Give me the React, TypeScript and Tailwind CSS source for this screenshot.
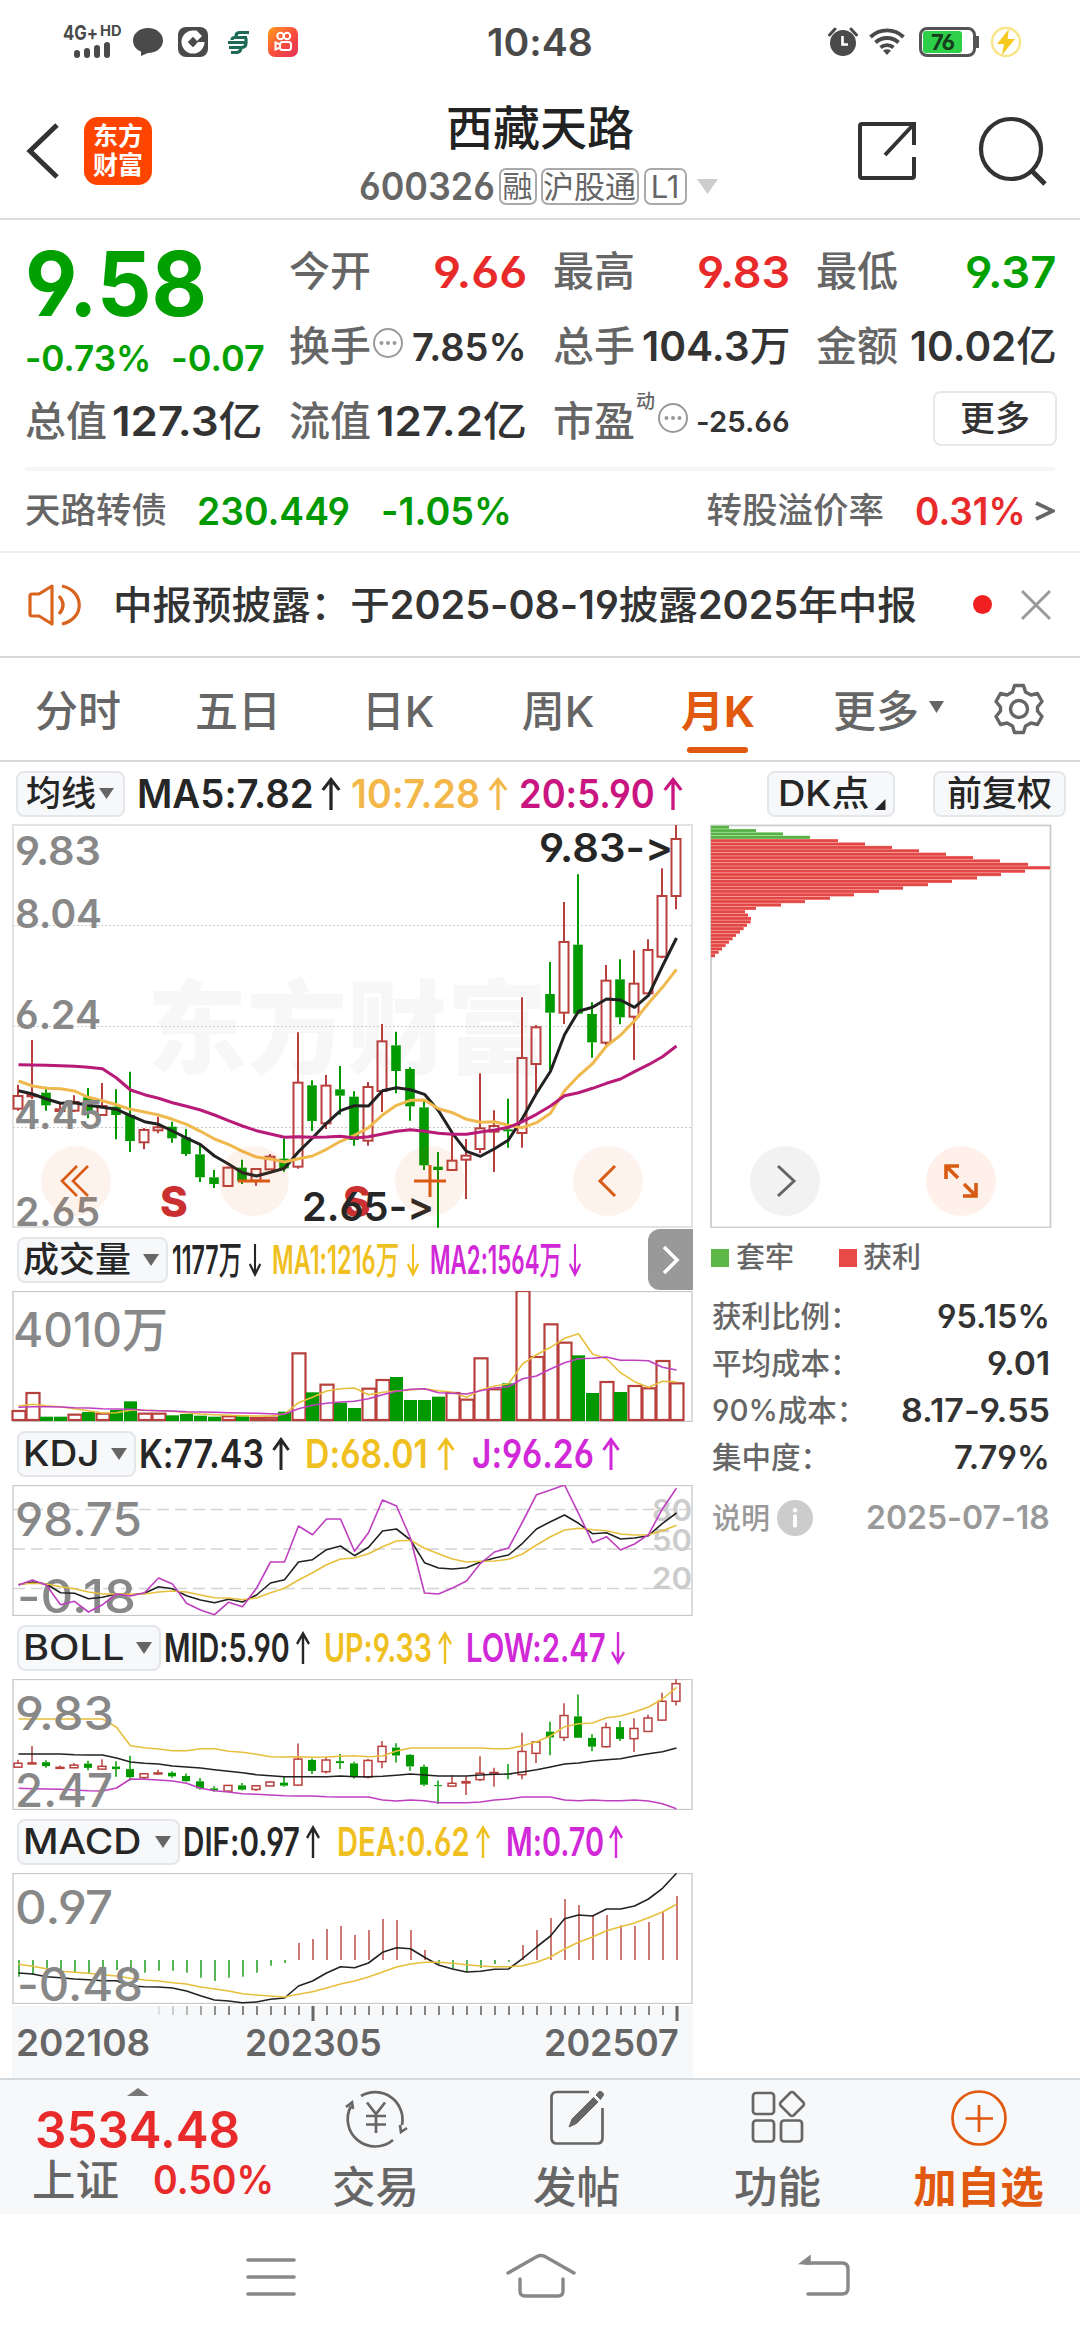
import { useLayoutEffect, useRef, useState } from 'react';
import type { ReactNode } from 'react';

const FONT = "font-['Inter','Noto_Sans_CJK_SC',sans-serif] [font-feature-settings:'cv03','cv04','calt'_0]";

const STEP = 14;
const FIRST_X = 18.5;
const UP = '#b8403c';
const DOWN = '#009a00';

// r = rising, g = falling; then wick top, body top, body bottom, wick bottom
type Candle = ['r' | 'g', number, number, number, number];

const candles: Candle[] = [
  ['r', 824, 858, 896, 902], ['r', 690, 855, 859, 868], ['g', 830, 848, 886, 902], ['r', 880, 898, 903, 906],
  ['r', 856, 876, 902, 906], ['g', 834, 862, 903, 925], ['r', 819, 888, 915, 917], ['g', 838, 890, 915, 988],
  ['g', 785, 915, 993, 1026], ['r', 954, 960, 997, 1018], ['r', 920, 952, 961, 970], ['g', 935, 950, 985, 998],
  ['g', 957, 982, 1032, 1038], ['g', 1000, 1033, 1102, 1116], ['g', 1080, 1102, 1122, 1134], ['r', 1070, 1073, 1128, 1130],
  ['g', 1049, 1073, 1114, 1122], ['r', 1074, 1077, 1112, 1127], ['r', 1032, 1040, 1078, 1080], ['g', 985, 1046, 1075, 1085],
  ['r', 667, 818, 1070, 1076], ['g', 811, 826, 933, 963], ['r', 795, 827, 940, 957], ['g', 768, 838, 857, 914],
  ['g', 844, 860, 990, 1007], ['r', 816, 831, 992, 1007], ['r', 642, 694, 843, 906], ['g', 665, 706, 783, 850],
  ['g', 772, 777, 889, 932], ['g', 870, 892, 1066, 1080], ['g', 1026, 1070, 1080, 1253], ['r', 975, 1052, 1080, 1082],
  ['r', 987, 1037, 1049, 1167], ['r', 790, 955, 1017, 1030], ['r', 901, 948, 965, 1086], ['g', 866, 958, 964, 1013],
  ['r', 562, 744, 969, 1013], ['r', 645, 652, 762, 855], ['g', 456, 552, 608, 780], ['r', 276, 396, 608, 642],
  ['g', 193, 404, 611, 613], ['g', 577, 612, 697, 743], ['r', 465, 512, 698, 705], ['g', 448, 508, 622, 643],
  ['r', 421, 521, 620, 750], ['r', 388, 420, 550, 553], ['r', 175, 258, 440, 445], ['r', 45, 87, 258, 298],
];

const ma5 = [842, 852, 867, 880, 878, 886, 892, 898, 917, 935, 943, 963, 984, 1004, 1038, 1062, 1088, 1098, 1087, 1075, 1025, 984, 940, 902, 887, 888, 842, 833, 839, 853, 902, 970, 1024, 1039, 1016, 990, 925, 850, 784, 674, 604, 592, 567, 570, 592, 556, 468, 384];
const ma10 = [813, 828, 835, 836, 843, 862, 872, 884, 898, 906, 915, 928, 943, 964, 987, 1003, 1024, 1041, 1047, 1056, 1046, 1038, 1018, 994, 976, 953, 915, 886, 871, 870, 896, 908, 928, 937, 935, 946, 953, 938, 910, 842, 798, 761, 708, 676, 632, 580, 532, 478];
const ma20 = [764, 765, 766, 767, 769, 772, 776, 804, 840, 854, 865, 878, 889, 900, 915, 932, 948, 962, 972, 982, 980, 982, 981, 979, 984, 980, 972, 964, 959, 964, 970, 973, 973, 966, 960, 952, 935, 913, 888, 857, 848, 835, 820, 807, 785, 764, 740, 708];

const volumes = [540, 486, 560, 560, 551, 546, 548, 540, 514, 548, 548, 556, 552, 557, 560, 556, 559, 561, 560, 545, 367, 487, 461, 518, 534, 473, 447, 441, 510, 510, 500, 486, 506, 382, 475, 460, 180, 378, 280, 335, 376, 489, 453, 486, 465, 472, 390, 457];
const volumeSides = 'rrggrgrggrrggggrgrrgrgrggrrggggrrrrgrrrrggrgrrrr';
const volMa1 = [528, 523, 527, 530, 536, 542, 549, 548, 541, 541, 542, 544, 548, 552, 554, 556, 557, 558, 558, 552, 518, 502, 483, 476, 474, 494, 487, 483, 480, 476, 482, 487, 502, 480, 468, 462, 402, 374, 352, 325, 311, 372, 386, 428, 455, 472, 454, 455];
const volMa2 = [532, 530, 530, 531, 533, 534, 536, 537, 538, 541, 542, 543, 545, 546, 547, 548, 549, 550, 551, 553, 536, 526, 520, 516, 514, 506, 494, 484, 478, 476, 488, 490, 492, 482, 474, 470, 446, 438, 417, 398, 386, 385, 381, 391, 391, 392, 412, 420];

const kdjK = [314, 306, 312, 338, 340, 356, 352, 342, 345, 340, 320, 326, 347, 360, 368, 358, 366, 345, 309, 299, 246, 239, 209, 198, 227, 202, 153, 147, 180, 248, 264, 267, 263, 246, 234, 225, 190, 147, 125, 105, 130, 161, 158, 177, 174, 167, 130, 99];
const kdjD = [313, 310, 312, 320, 326, 336, 342, 342, 343, 342, 336, 333, 336, 345, 353, 354, 359, 354, 338, 325, 300, 278, 254, 237, 234, 221, 200, 183, 181, 205, 221, 237, 246, 244, 243, 238, 222, 195, 170, 150, 145, 149, 152, 162, 165, 164, 152, 136];
const kdjJ = [315, 300, 316, 374, 364, 396, 374, 342, 348, 338, 294, 312, 370, 390, 404, 367, 380, 325, 246, 246, 138, 164, 117, 117, 214, 158, 60, 78, 175, 339, 342, 324, 303, 250, 216, 204, 126, 44, 30, 15, 100, 188, 170, 210, 192, 164, 86, 25];

const bollUp = [717, 717, 717, 717, 717, 717, 717, 742, 797, 803, 807, 812, 812, 806, 806, 814, 817, 823, 830, 831, 830, 832, 831, 829, 827, 830, 828, 813, 804, 804, 804, 804, 804, 804, 806, 806, 797, 785, 768, 740, 731, 729, 713, 708, 696, 681, 657, 622];
const bollMid = [822, 822, 822, 822, 824, 825, 825, 834, 846, 850, 852, 858, 861, 864, 869, 874, 878, 884, 887, 890, 890, 890, 890, 888, 890, 890, 889, 886, 882, 885, 888, 888, 888, 885, 883, 882, 876, 869, 861, 852, 849, 843, 839, 836, 828, 821, 815, 804];
const bollLow = [925, 926, 927, 928, 930, 932, 933, 924, 897, 898, 900, 903, 910, 925, 932, 936, 941, 943, 945, 947, 948, 948, 950, 951, 951, 951, 960, 963, 960, 962, 968, 968, 968, 966, 960, 957, 951, 951, 951, 960, 962, 960, 962, 962, 960, 963, 971, 986];

const macdBars = [500, 495, 488, 490, 488, 492, 488, 480, 488, 488, 482, 482, 488, 503, 513, 503, 500, 488, 467, 459, 399, 387, 357, 348, 375, 360, 327, 330, 360, 420, 462, 476, 486, 474, 462, 455, 405, 360, 324, 267, 285, 315, 315, 346, 348, 336, 303, 258];
const dif = [489, 492, 500, 503, 507, 509, 512, 512, 528, 530, 531, 534, 543, 557, 570, 573, 578, 576, 568, 564, 528, 513, 489, 470, 473, 459, 427, 413, 416, 442, 465, 477, 486, 484, 478, 477, 446, 411, 378, 326, 315, 318, 297, 297, 288, 267, 235, 190];
const dea = [463, 469, 476, 484, 487, 490, 494, 498, 505, 510, 513, 518, 522, 531, 537, 543, 551, 555, 558, 561, 553, 545, 534, 522, 513, 501, 486, 471, 462, 457, 457, 460, 464, 468, 470, 470, 467, 457, 441, 417, 397, 381, 362, 350, 339, 323, 306, 283];

// Cost distribution, one length per price level, top to bottom
const chips = [18, 45, 72, 99, 127, 154, 181, 208, 235, 262, 289, 317, 339, 314, 290, 266, 241, 217, 192, 168, 143, 119, 94, 70, 45, 34, 37, 40, 39.5, 36, 32.5, 29, 25, 21.5, 18, 14.5, 11, 7.5, 4];

const xAt = (i: number) => FIRST_X + i * STEP;
const trace = (values: number[], base: number) =>
  values.map((v, i) => `${xAt(i)},${(base + v / 3).toFixed(1)}`).join(' ');

function Line({ values, base, color, width = 1.6 }: { values: number[]; base: number; color: string; width?: number }) {
  return <polyline points={trace(values, base)} fill="none" stroke={color} strokeWidth={width} strokeLinejoin="round" />;
}

function Candles({ y, half, stroke }: { y: (v: number) => number; half: number; stroke: number }) {
  return (
    <g>
      {candles.map(([side, high, top, bottom, low], i) => {
        const x = xAt(i) - 0.5;
        const color = side === 'r' ? UP : DOWN;
        const bodyH = Math.max(y(bottom) - y(top), 1);
        return (
          <g key={i} stroke={color} strokeWidth={stroke}>
            <line x1={x} x2={x} y1={y(high)} y2={y(top)} />
            <line x1={x} x2={x} y1={y(bottom)} y2={y(low)} />
            {side === 'r' ? (
              <rect x={x - half + stroke / 2} y={y(top)} width={half * 2 - stroke} height={bodyH} fill="none" />
            ) : (
              <rect x={x - half + 0.7} y={y(top)} width={half * 2 - 1.4} height={bodyH} fill={color} stroke="none" />
            )}
          </g>
        );
      })}
    </g>
  );
}

function Label({ x, y, size, w, color = '#888888', children }: { x: number; y: number; size: number; w: number; color?: string; children: string }) {
  return (
    <text x={x} y={y} fontSize={size} fontWeight={size > 44 ? 500 : 600} fill={color} textLength={w} lengthAdjust="spacingAndGlyphs">
      {children}
    </text>
  );
}

// Squeezes or stretches its text to the width of the box
function FitText({ className = '', children }: { className?: string; children: ReactNode }) {
  const box = useRef<HTMLSpanElement>(null);
  const inner = useRef<HTMLSpanElement>(null);
  const [scale, setScale] = useState(1);

  useLayoutEffect(() => {
    if (box.current && inner.current && inner.current.offsetWidth) {
      setScale(box.current.clientWidth / inner.current.offsetWidth);
    }
  }, [children]);

  return (
    <span ref={box} className={`block shrink-0 whitespace-nowrap ${className}`}>
      <span ref={inner} className="inline-block origin-left" style={{ transform: `scaleX(${scale})` }}>
        {children}
      </span>
    </span>
  );
}

function Arrow({ dir, className }: { dir: 'up' | 'down'; className: string }) {
  return (
    <svg viewBox="0 0 20 34" preserveAspectRatio="none" className={`h-[34px] shrink-0 ${className}`} fill="none" stroke="currentColor" strokeWidth="3">
      {dir === 'up' ? <path d="M10 33V3M2.500 13L10 2.500L17.500 13" /> : <path d="M10 1V31M2.500 21L10 31.500L17.500 21" />}
    </svg>
  );
}

function Caret({ className }: { className: string }) {
  return (
    <svg viewBox="0 0 16 12" preserveAspectRatio="none" className={`shrink-0 ${className}`}>
      <path d="M0 0H16L8 12Z" fill="currentColor" />
    </svg>
  );
}

function MoreDots({ className }: { className: string }) {
  return (
    <svg viewBox="0 0 30 30" className={`h-[30px] w-[30px] shrink-0 ${className}`}>
      <circle cx="15" cy="15" r="14" fill="none" stroke="#999" strokeWidth="2" />
      <circle cx="8.500" cy="15" r="2" fill="#999" />
      <circle cx="15" cy="15" r="2" fill="#999" />
      <circle cx="21.500" cy="15" r="2" fill="#999" />
    </svg>
  );
}

function StatusBar() {
  return (
    <div className="flex h-[84px] items-center pl-[62px] pr-[58px] text-[#4a4a4a]">
      <div className="flex w-[60px] flex-col items-center">
        <div className="flex h-[15px] items-start leading-none">
          <FitText className="w-[35px] text-[20px] font-bold leading-[15px]">4G+</FitText>
          <FitText className="ml-[2px] w-[22px] text-[14px] font-bold leading-[10px]">HD</FitText>
        </div>
        <div className="mt-[1px] flex items-end gap-[4px]">
          <i className="h-[8px] w-[6px] rounded-sm bg-[#4a4a4a]" />
          <i className="h-[10px] w-[6px] rounded-sm bg-[#4a4a4a]" />
          <i className="h-[13px] w-[6px] rounded-sm bg-[#4a4a4a]" />
          <i className="h-[16px] w-[6px] rounded-sm bg-[#4a4a4a]" />
        </div>
      </div>
      <svg viewBox="0 0 32 30" className="ml-[10px] h-[30px] w-[32px]">
        <path d="M16 1C24.500 1 31 6.500 31 13.500S24.500 26 16 26L9 29V24.500C4 22.500 1 18.500 1 13.500C1 6.500 7.500 1 16 1Z" fill="#4a4a4a" />
      </svg>
      <svg viewBox="0 0 30 30" className="ml-[14px] h-[30px] w-[30px]">
        <rect width="30" height="30" rx="8" fill="#4a4a4a" />
        <path d="M15 3.500A11.500 11.500 0 1 0 26.500 15L20 15L15 20L10 15L15 10L19 14L24 9L18.500 3.500Z" fill="#fff" />
        <path d="M10 15L15 10L18 13L15.500 15L18 17L15 20Z" fill="#4a4a4a" />
      </svg>
      <svg viewBox="0 0 22 24" className="ml-[19px] h-[24px] w-[22px]" fill="none" stroke="#1d6b57" strokeWidth="3.200">
        <path d="M22 2.500H13Q9 2.500 9 6M20 7.500H8Q5 7.500 5 10M20 12.500H1M19 8V13Q19 17.500 14 17.500H2M14 17Q14 22.500 9 22.500H4" />
      </svg>
      <svg viewBox="0 0 30 30" className="ml-[19px] h-[30px] w-[30px]">
        <defs>
          <linearGradient id="ks" x1="0" y1="0" x2="1" y2="1">
            <stop offset="0" stopColor="#ff9f1c" />
            <stop offset="0.500" stopColor="#f9503c" />
            <stop offset="1" stopColor="#e3305a" />
          </linearGradient>
        </defs>
        <rect width="30" height="30" rx="7" fill="url(#ks)" />
        <g fill="none" stroke="#fff" strokeWidth="2">
          <circle cx="12.500" cy="9" r="3.200" />
          <circle cx="19" cy="9" r="3.200" />
          <rect x="12" y="15" width="11" height="8" rx="2.500" />
          <path d="M12 17.500L7.500 15.500V22.500L12 20.500" />
        </g>
      </svg>
      <FitText className="ml-[189px] w-[106px] text-[38px] font-semibold leading-none">10:48</FitText>
      <svg viewBox="0 0 30 30" className="ml-auto h-[30px] w-[30px]">
        <circle cx="15" cy="16" r="13" fill="#4a4a4a" />
        <path d="M1.500 8L7 2M28.500 8L23 2" stroke="#4a4a4a" strokeWidth="3" strokeLinecap="round" />
        <path d="M14.500 9V17.500H20" fill="none" stroke="#fff" strokeWidth="2.600" />
      </svg>
      <svg viewBox="0 0 36 28" className="ml-[11px] h-[28px] w-[36px]" fill="none" stroke="#4a4a4a" strokeWidth="3.800">
        <path d="M1.500 9A24 24 0 0 1 34.500 9M6.500 14.500A17 17 0 0 1 29.500 14.500M11.500 19.500A10 10 0 0 1 24.500 19.500" />
        <path d="M18 27L14 22.500Q18 20 22 22.500Z" fill="#4a4a4a" stroke="none" />
      </svg>
      <div className="ml-[14px] flex h-[30px] w-[57px] items-center rounded-[8px] border-[3px] border-[#555] p-[1px]">
        <div className="flex h-full w-[39px] items-center justify-center rounded-[3px] bg-[#2ed04a] text-[22px] font-bold leading-none tracking-tighter text-[#173d1c]">76</div>
      </div>
      <i className="h-[12px] w-[3px] bg-[#555]" />
      <svg viewBox="0 0 32 32" className="ml-[11px] h-[32px] w-[32px]">
        <circle cx="16" cy="16" r="14" fill="none" stroke="#fbe58a" strokeWidth="2.500" />
        <path d="M19 3L7 18H14L12 29L25 13H17.500Z" fill="#f7c81e" />
      </svg>
    </div>
  );
}

function Header() {
  return (
    <header className="grid h-[136px] grid-cols-[1fr_auto_1fr] border-b-2 border-[#dcdcdc]">
      <div className="flex items-center pl-[26px]">
        <svg viewBox="0 0 34 56" className="h-[56px] w-[34px]" fill="none" stroke="#333" strokeWidth="5">
          <path d="M31 2L4 28L31 54" />
        </svg>
        <div className="ml-[24px] flex h-[68px] w-[68px] flex-col items-center justify-center rounded-[14px] bg-[#ff4400] text-[25px] font-bold leading-[29px] text-white">
          <span>东方</span>
          <span>财富</span>
        </div>
      </div>
      <div className="flex flex-col items-center pt-[18px]">
        <h1 className="text-[47px] font-medium leading-[52px] text-[#222]">西藏天路</h1>
        <div className="mt-[13px] flex h-[38px] items-center pr-[4px] text-[#666]">
          <FitText className="w-[136px] text-[38px] font-semibold leading-[38px]">600326</FitText>
          <span className="ml-[4px] flex h-[37px] w-[38px] items-center justify-center rounded-[7px] border-2 border-[#aaa] text-[30px] leading-none">融</span>
          <span className="ml-[4px] flex h-[37px] w-[98px] items-center justify-center rounded-[7px] border-2 border-[#aaa] text-[31px] leading-none">沪股通</span>
          <span className="ml-[5px] flex h-[37px] w-[43px] items-center justify-center rounded-[7px] border-2 border-[#aaa] text-[31px] leading-none">L1</span>
          <Caret className="ml-[10px] h-[15px] w-[21px] text-[#ccc]" />
        </div>
      </div>
      <div className="flex items-center justify-end pr-[33px]">
        <svg viewBox="0 0 60 60" className="h-[60px] w-[60px]" fill="none" stroke="#333" strokeWidth="4">
          <path d="M41 3H5Q3 3 3 5V55Q3 57 5 57H55Q57 57 57 55V36" />
          <path d="M28 34L56 4M39 3H57V24" />
        </svg>
        <svg viewBox="0 0 70 70" className="ml-[60px] h-[70px] w-[70px]" fill="none" stroke="#333" strokeWidth="4.200">
          <circle cx="34" cy="33" r="30" />
          <path d="M54 54L68 68" strokeWidth="5" />
        </svg>
      </div>
    </header>
  );
}

function Stat({ label, value, unit, color = 'text-[#333]', width, size = 'text-[41px]', children }: { label: string; value: string; unit?: string; color?: string; width: string; size?: string; children?: ReactNode }) {
  return (
    <div className="flex h-[75px] items-center justify-between leading-none">
      <span className="flex items-center text-[41px] font-medium text-[#666]">
        {label}
        {children}
      </span>
      <FitText className={`font-semibold ${size} ${color} ${width}`}>
        {value}
        {unit && <span className="font-medium">{unit}</span>}
      </FitText>
    </div>
  );
}

function Quote() {
  return (
    <section className="px-[25px] pt-[14px]">
      <div className="grid grid-cols-[238px_238px_237px_241px] gap-x-[26px]">
        <div className="row-span-2 flex flex-col text-[#00a000]">
          <FitText className="mt-[5px] w-[182px] text-[90px] font-bold leading-[90px]">9.58</FitText>
          <div className="mt-[9px] flex text-[36px] font-semibold leading-[40px]">
            <FitText className="w-[126px]">-0.73%</FitText>
            <FitText className="ml-[20px] w-[94px]">-0.07</FitText>
          </div>
        </div>
        <Stat label="今开" value="9.66" color="text-[#e92a2a]" size="text-[44px]" width="w-[94px]" />
        <Stat label="最高" value="9.83" color="text-[#e92a2a]" size="text-[44px]" width="w-[93px]" />
        <Stat label="最低" value="9.37" color="text-[#00a000]" size="text-[44px]" width="w-[92px]" />
        <Stat label="换手" value="7.85%" size="text-[38px]" width="w-[115px]">
          <MoreDots className="-mt-2 ml-[2px]" />
        </Stat>
        <Stat label="总手" value="104.3" unit="万" width="w-[148px]" />
        <Stat label="金额" value="10.02" unit="亿" width="w-[147px]" />
        <Stat label="总值" value="127.3" unit="亿" width="w-[151px]" />
        <Stat label="流值" value="127.2" unit="亿" width="w-[151px]" />
        <Stat label="市盈" value="-25.66" size="text-[29px]" width="w-[94px]">
          <span className="-mt-10 ml-[1px] text-[19px]">动</span>
          <MoreDots className="-mt-2 ml-[3px]" />
        </Stat>
        <div className="flex items-center justify-end">
          <button className="mt-[-6px] h-[55px] w-[124px] rounded-[8px] border-2 border-[#e8e8e8] text-[35px] font-medium leading-none text-[#333]">更多</button>
        </div>
      </div>
      <div className="mt-[8px] flex h-[84px] items-center border-t-4 border-[#f6f6f6] text-[35.500px] font-medium leading-none text-[#666]">
        <span>天路转债</span>
        <FitText className="ml-[30px] w-[153px] text-[38px] font-semibold text-[#009a00]">230.449</FitText>
        <FitText className="ml-[31px] w-[131px] text-[38px] font-semibold text-[#009a00]">-1.05%</FitText>
        <span className="ml-auto">转股溢价率</span>
        <FitText className="ml-[31px] w-[111px] text-[38px] font-semibold text-[#e92a2a]">0.31%</FitText>
        <svg viewBox="0 0 20 20" className="ml-[9px] h-[20px] w-[20px]" fill="none" stroke="#666" strokeWidth="3.600">
          <path d="M1 2L18 10L1 18" />
        </svg>
      </div>
    </section>
  );
}

function Notice() {
  return (
    <div className="flex h-[107px] items-center border-y-2 border-t-[#eee] border-b-[#d8d8d8] pl-[28px] pr-[28px]">
      <svg viewBox="0 0 54 44" className="h-[44px] w-[54px]" fill="none" stroke="#d9641e" strokeWidth="3.200" strokeLinejoin="round">
        <path d="M24 3L11 11H4Q2 11 2 13V31Q2 33 4 33H11L24 41Z" />
        <path d="M31 13Q39 22 31 31M34 3C57 8 57 36 34 41" />
      </svg>
      <FitText className="ml-[31px] w-[804px] text-[39px] font-medium leading-none text-[#333]">
        中报预披露：于<b className="font-semibold">2025-08-19</b>披露<b className="font-semibold">2025</b>年中报
      </FitText>
      <i className="ml-auto h-[19px] w-[19px] rounded-full bg-[#f02020]" />
      <svg viewBox="0 0 32 32" className="ml-[28px] h-[32px] w-[32px]" stroke="#999" strokeWidth="3">
        <path d="M2 2L30 30M30 2L2 30" />
      </svg>
    </div>
  );
}

const tabs = ['分时', '五日', '日K', '周K', '月K'];

function Tabs() {
  return (
    <nav className="flex h-[104px] items-center border-b-2 border-[#d8d8d8] text-[43px] font-medium leading-none text-[#666]">
      {tabs.map((tab) => (
        <div key={tab} className={tab === '月K' ? 'relative flex h-full w-[160px] items-center justify-center pt-[4px] pr-[4px] font-bold text-[#e0590f]' : 'flex w-[160px] items-center justify-center pt-[4px] pr-[4px]'}>
          {tab}
          {tab === '月K' && <i className="absolute bottom-[7px] left-[47px] h-[6px] w-[61px] rounded-full bg-[#e0590f]" />}
        </div>
      ))}
      <div className="ml-[33px] flex items-center pt-[4px]">
        更多
        <Caret className="-mt-2 ml-[10px] h-[12px] w-[15px]" />
      </div>
      <svg viewBox="0 0 52 52" className="ml-auto mr-[35px] h-[52px] w-[52px]" fill="none" stroke="#666" strokeWidth="3.400" strokeLinejoin="round">
        <path d="M21.500 2.500H30.500L32.500 9L38 12L44.500 10.500L49 18.500L44.500 24V28L49 33.500L44.500 41.500L38 40L32.500 43L30.500 49.500H21.500L19.500 43L14 40L7.500 41.500L3 33.500L7.500 28V24L3 18.500L7.500 10.500L14 12L19.500 9Z" />
        <circle cx="26" cy="26" r="8.500" />
      </svg>
    </nav>
  );
}

type Reading = { text: string; box: string; dir: 'up' | 'down'; arrow: string };

const chipBox = 'flex h-[46px] shrink-0 items-center rounded-[8px] border-2 border-[#e4e6ea] bg-[#f7f8fa] leading-none text-[#262626] font-medium';
const readingColors = ['text-[#262626]', 'text-[#efc020]', 'text-[#d128d8]'];
const maColors = ['text-[#262626]', 'text-[#f4b84a]', 'text-[#c9157f]'];

function Readings({ items, colors = readingColors }: { items: Reading[]; colors?: string[] }) {
  return (
    <>
      {items.map((r, i) => (
        <div key={r.text} className={`flex items-center ${colors[i]}`}>
          <FitText className={`text-[39px] font-semibold leading-none ${r.box}`}>
            {r.text.replace('万', '')}
            {r.text.endsWith('万') && <span className="font-medium">万</span>}
          </FitText>
          <Arrow dir={r.dir} className={r.arrow} />
        </div>
      ))}
    </>
  );
}

function PaneBar({ label, labelBox, chip, items }: { label: string; labelBox: string; chip: string; items: Reading[] }) {
  return (
    <div className="flex h-[63px] items-center pl-[17px]">
      <div className={`${chipBox} ${chip} justify-between pl-[4px] pr-[7px]`}>
        <FitText className={`text-[35px] ${labelBox}`}>{label}</FitText>
        <Caret className="h-[12px] w-[16px] text-[#666]" />
      </div>
      <Readings items={items} />
    </div>
  );
}

function MainBar() {
  return (
    <div className="flex h-[62px] items-center pl-[16px] pr-[14px] pt-[1px]">
      <div className={`${chipBox} w-[109px] pl-[8px] text-[35px]`}>
        均线
        <Caret className="ml-[3px] h-[11px] w-[15px] text-[#666]" />
      </div>
      <Readings
        colors={maColors}
        items={[
          { text: 'MA5:7.82', box: 'ml-[12px] w-[177px]', dir: 'up', arrow: 'ml-[6px] w-[22px]' },
          { text: '10:7.28', box: 'ml-[9px] w-[129px]', dir: 'up', arrow: 'ml-[7px] w-[22px]' },
          { text: '20:5.90', box: 'ml-[10px] w-[136px]', dir: 'up', arrow: 'ml-[7px] w-[22px]' },
        ]}
      />
      <div className={`${chipBox} ml-auto w-[128px] pl-[9px] text-[35px]`}>
        <FitText className="w-[91px]">DK点</FitText>
        <svg viewBox="0 0 12 12" className="ml-[5px] mt-[22px] h-[11px] w-[12px]">
          <path d="M12 0V12H0Z" fill="#262626" />
        </svg>
      </div>
      <div className={`${chipBox} ml-[38px] w-[133px] justify-center text-[35px]`}>前复权</div>
    </div>
  );
}

function RoundButton({ className, children }: { className: string; children: ReactNode }) {
  return (
    <button className={`absolute top-[322px] flex h-[70px] w-[70px] items-center justify-center rounded-full ${className}`}>
      <svg viewBox="0 0 34 34" className="h-[34px] w-[34px]" fill="none" stroke="currentColor" strokeWidth="3">
        {children}
      </svg>
    </button>
  );
}

function PriceChart() {
  const y = (v: number) => 810 + v / 3;
  return (
    <div className="relative h-[404px]">
      <svg viewBox="0 824 694 404" className="block h-[404px] w-[694px]">
        <text x="147" y="1066" fontSize="102" fontWeight="900" fill="#f7f7f7" textLength="400" lengthAdjust="spacingAndGlyphs">东方财富</text>
        <rect x="13" y="825" width="679" height="402" fill="none" stroke="#e2e2e2" strokeWidth="2" />
        <g stroke="#ccc" strokeWidth="1" strokeDasharray="2 2">
          <line x1="13" x2="692" y1="925.500" y2="925.500" />
          <line x1="13" x2="692" y1="1026.500" y2="1026.500" />
          <line x1="13" x2="692" y1="1127.500" y2="1127.500" />
        </g>
        <Candles y={y} half={5.500} stroke={2} />
        <Line values={ma5} base={810} color="#222" width={3} />
        <Line values={ma10} base={810} color="#f0b94e" width={3} />
        <Line values={ma20} base={810} color="#b81a78" width={3} />
        <Label x={15} y={865} size={40} w={86}>9.83</Label>
        <Label x={15} y={928} size={40} w={87}>8.04</Label>
        <Label x={15} y={1028.500} size={40} w={86}>6.24</Label>
        <Label x={14} y={1129} size={40} w={89}>4.45</Label>
        <Label x={15} y={1226} size={40} w={85}>2.65</Label>
        <text x="160" y="1217" fontSize="42" fontWeight="800" fill="#c9302f">S</text>
        <text x="343" y="1217" fontSize="42" fontWeight="800" fill="#c9302f">S</text>
        <Label x={539} y={862} size={40} w={134} color="#262626">{'9.83->'}</Label>
        <Label x={302} y={1220.500} size={40} w={132} color="#262626">{'2.65->'}</Label>
      </svg>
      <RoundButton className="left-[41px] bg-[#e05a0f]/8 text-[#d95a12]">
        <path d="M18 2L3 17L18 32M29 2L14 17L29 32" strokeWidth="2.600" />
      </RoundButton>
      <RoundButton className="left-[219px] bg-[#e05a0f]/8 text-[#d95a12]">
        <path d="M1 17H33" />
      </RoundButton>
      <RoundButton className="left-[395px] bg-[#e05a0f]/8 text-[#d95a12]">
        <path d="M1 17H33M17 1V33" />
      </RoundButton>
      <RoundButton className="left-[573px] bg-[#e05a0f]/8 text-[#d95a12]">
        <path d="M24 2L9 17L24 32" />
      </RoundButton>
    </div>
  );
}

function VolumeChart() {
  const y = (v: number) => 1230 + v / 3;
  return (
    <svg viewBox="0 1291 694 131" className="block h-[131px] w-[694px]">
      <rect x="13" y="1291.500" width="679" height="130" fill="#fff" stroke="#c8c8c8" strokeWidth="1.300" />
      <Label x={13} y={1347} size={48} w={155}>4010万</Label>
      {volumes.map((v, i) =>
        volumeSides[i] === 'r' ? (
          <rect key={i} x={xAt(i) - 6} y={y(v) + 1} width={13} height={y(570) - y(v) - 1} fill="#fff" stroke={UP} strokeWidth="2.200" />
        ) : (
          <rect key={i} x={xAt(i) - 6.500} y={y(v)} width={13} height={y(573) - y(v)} fill={DOWN} />
        )
      )}
      <Line values={volMa1} base={1230} color="#e8bf3c" />
      <Line values={volMa2} base={1230} color="#bf3fc0" />
    </svg>
  );
}

function KdjChart() {
  return (
    <svg viewBox="0 1485 694 131" className="block h-[131px] w-[694px]">
      <rect x="13" y="1485.500" width="679" height="130" fill="none" stroke="#c8c8c8" strokeWidth="1.300" />
      <g stroke="#d4d4d4" strokeWidth="1.400" strokeDasharray="12 6">
        <line x1="13" x2="692" y1="1509.500" y2="1509.500" />
        <line x1="13" x2="692" y1="1549" y2="1549" />
        <line x1="13" x2="692" y1="1588.500" y2="1588.500" />
      </g>
      <Label x={652} y={1521} size={30} w={40} color="#ccc">80</Label>
      <Label x={652} y={1550.500} size={30} w={40} color="#ccc">50</Label>
      <Label x={652} y={1589} size={30} w={40} color="#ccc">20</Label>
      <Label x={15} y={1536} size={46} w={127}>98.75</Label>
      <Label x={17} y={1613} size={46} w={119}>-0.18</Label>
      <Line values={kdjK} base={1480} color="#222" />
      <Line values={kdjD} base={1480} color="#e8bf3c" />
      <Line values={kdjJ} base={1480} color="#bf3fc0" />
    </svg>
  );
}

function BollChart() {
  // same candles, squeezed to a third of the price pane
  const y = (v: number) => 1480 + (598 + (v - 45) * 0.3096) / 3;
  return (
    <svg viewBox="0 1679 694 131" className="block h-[131px] w-[694px]">
      <rect x="13" y="1679.500" width="679" height="130" fill="none" stroke="#c8c8c8" strokeWidth="1.300" />
      <Candles y={y} half={4.700} stroke={1.500} />
      <Line values={bollUp} base={1480} color="#e8bf3c" />
      <Line values={bollMid} base={1480} color="#222" />
      <Line values={bollLow} base={1480} color="#bf3fc0" />
      <Label x={15} y={1730} size={46} w={99}>9.83</Label>
      <Label x={15} y={1807} size={46} w={98}>2.47</Label>
    </svg>
  );
}

function MacdChart() {
  const zero = 1960;
  return (
    <svg viewBox="0 1873 694 131" className="block h-[131px] w-[694px]">
      <rect x="13" y="1873.500" width="679" height="130" fill="none" stroke="#c8c8c8" strokeWidth="1.300" />
      {macdBars.map((v, i) => (
        <line key={i} x1={xAt(i) + 0.500} x2={xAt(i) + 0.500} y1={zero} y2={1810 + v / 3} stroke={v > 450 ? '#3aa83a' : '#c4615c'} strokeWidth="1.700" />
      ))}
      <Line values={dif} base={1810} color="#222" />
      <Line values={dea} base={1810} color="#e8bf3c" />
      <Label x={15} y={1924} size={46} w={98}>0.97</Label>
      <Label x={17} y={2001} size={46} w={126}>-0.48</Label>
    </svg>
  );
}

const ticks = Array.from({ length: 38 }, (_, k) => k + 10);

function DateAxis() {
  return (
    <div className="ml-[12px] mt-[2px] h-[72px] w-[681px] bg-[#f7f8fa]">
      <svg viewBox="12 2006 681 16" className="block h-[16px] w-[681px]">
        {ticks.map((i) => {
          const major = i === 21 || i === 47;
          return (
            <line
              key={i}
              x1={xAt(i) + 0.500}
              x2={xAt(i) + 0.500}
              y1="2006"
              y2={major ? 2021 : 2015}
              stroke="#666"
              strokeWidth={major ? 3 : 1.600}
              opacity={Math.min(1, 0.2 + (i - 10) * 0.17)}
            />
          );
        })}
      </svg>
      <div className="mt-[2px] flex text-[37px] font-semibold leading-[37px] text-[#666]">
        <FitText className="ml-[4px] w-[134px]">202108</FitText>
        <FitText className="ml-[95px] w-[137px]">202305</FitText>
        <FitText className="ml-[162px] w-[135px]">202507</FitText>
      </div>
    </div>
  );
}

function ChipPanel() {
  const rows = [
    ['获利比例：', '95.15%', 'w-[113px]'],
    ['平均成本：', '9.01', 'w-[63px]'],
    ['90%成本：', '8.17-9.55', 'w-[149px]'],
    ['集中度：', '7.79%', 'w-[96px]'],
  ];
  return (
    <aside className="relative ml-[16px] w-[342px]">
      <svg viewBox="710 824 342 404" className="block h-[404px] w-[342px]">
        <rect x="711" y="825.500" width="339.500" height="402" fill="#fff" stroke="#ccc" strokeWidth="1.800" />
        {chips.map((w, i) => (
          <g key={i}>
            <rect x="711" y={825.500 + i * 3.380} width={w} height="3.400" fill={i < 4 ? '#a5dd98' : '#ff8f8c'} />
            <rect x="711" y={825.900 + i * 3.380} width={w} height="2.600" fill={i < 4 ? '#56b043' : '#e04846'} />
          </g>
        ))}
      </svg>
      <RoundButton className="left-[40px] bg-[#f2f2f2] text-[#666]">
        <path d="M10 2L26 17L10 32" />
      </RoundButton>
      <RoundButton className="left-[216px] bg-[#fff1ea] text-[#d95a12]">
        <path d="M2 15V2H15M2 2L14 14M32 19V32H19M32 32L20 20" strokeWidth="3.600" />
      </RoundButton>
      <div className="mt-[11px] flex h-[37px] items-center text-[29px] font-medium leading-none text-[#666]">
        <i className="ml-[1px] h-[18px] w-[18px] bg-[#5db847]" />
        <span className="ml-[7px]">套牢</span>
        <i className="ml-[45px] h-[18px] w-[18px] bg-[#e84a48]" />
        <span className="ml-[6px]">获利</span>
      </div>
      <dl className="mt-[17px] pl-[2px] pr-[2px]">
        {rows.map(([label, value, width]) => (
          <div key={label} className="flex h-[47px] items-center justify-between leading-none">
            <dt className="text-[29.500px] font-medium text-[#666]">{label}</dt>
            <dd>
              <FitText className={`text-[32px] font-semibold text-[#333] ${width}`}>{value}</FitText>
            </dd>
          </div>
        ))}
      </dl>
      <div className="mt-[13px] flex h-[48px] items-center pl-[2px] pr-[2px] leading-none text-[#999]">
        <span className="text-[29px] font-medium">说明</span>
        <span className="ml-[7px] flex h-[36px] w-[36px] items-center justify-center rounded-full bg-[#ccc]">
          <svg viewBox="0 0 8 20" className="h-[20px] w-[8px]" fill="#fff">
            <circle cx="4" cy="2.200" r="2.200" />
            <rect x="2" y="6.500" width="4" height="13" rx="1.500" />
          </svg>
        </span>
        <FitText className="ml-auto w-[184px] text-[32px] font-semibold">2025-07-18</FitText>
      </div>
    </aside>
  );
}

const actions: { label: string; icon: ReactNode; color: string; weight: string }[] = [
  {
    label: '交易',
    color: 'text-[#666]',
    weight: 'font-medium',
    icon: (
      <>
        <path d="M17 8A27.500 27.500 0 0 1 58 37M49 52A27.500 27.500 0 0 1 7 18" />
        <path d="M2 19L8 14.500L9 21M63 40L57 44L56 37" />
        <path d="M23 14.500L32 26L41 14.500M32 26V45M22 28H42M22 36.500H42" />
      </>
    ),
  },
  {
    label: '发帖',
    color: 'text-[#666]',
    weight: 'font-medium',
    icon: (
      <>
        <path d="M44 4H12Q6.500 4 6.500 9.500V50Q6.500 55.500 12 55.500H52Q57.500 55.500 57.500 50V20" />
        <path d="M24 39L27 31L48.500 9.500L53 14L31.500 35.500Z" fill="currentColor" strokeWidth="1" />
        <path d="M51 7L54 3.500Q58 3 58.500 7L55.500 11.500Z" fill="currentColor" strokeWidth="1" />
      </>
    ),
  },
  {
    label: '功能',
    color: 'text-[#666]',
    weight: 'font-medium',
    icon: (
      <>
        <rect x="7" y="5" width="21" height="21" rx="3" />
        <rect x="7" y="32.500" width="21" height="21" rx="3" />
        <rect x="35" y="32.500" width="21" height="21" rx="3" />
        <path d="M44.500 4.500Q46 3.500 47.500 4.500L57.500 14.500Q58.500 16 57.500 17.500L47.500 27.500Q46 28.500 44.500 27.500L34.500 17.500Q33.500 16 34.500 14.500Z" />
      </>
    ),
  },
  {
    label: '加自选',
    color: 'text-[#e0590f]',
    weight: 'font-bold',
    icon: (
      <>
        <circle cx="32" cy="30" r="26.500" />
        <path d="M18.500 30.500H46M32 17V44" />
      </>
    ),
  },
];

function BottomBar() {
  return (
    <footer className="flex h-[136px] border-t-2 border-[#d3d8dc] bg-[#f7f8fa]">
      <div className="relative w-[275px] pt-[26px]">
        <svg viewBox="0 0 22 8" className="absolute left-[127px] top-[8px] h-[8px] w-[22px]">
          <path d="M0 8L11 0L22 8Z" fill="#777" />
        </svg>
        <FitText className="ml-[35px] w-[205px] text-[51px] font-semibold leading-[48px] text-[#e92a2a]">3534.48</FitText>
        <div className="mt-[4px] flex items-center leading-[44px]">
          <span className="ml-[32px] text-[43.500px] font-medium text-[#666]">上证</span>
          <FitText className="ml-[34px] w-[121px] text-[39px] font-semibold text-[#e92a2a]">0.50%</FitText>
        </div>
      </div>
      {actions.map((a) => (
        <div key={a.label} className={`flex w-[201px] flex-col items-center pt-[8px] ${a.color}`}>
          <svg viewBox="0 0 64 60" className="h-[60px] w-[64px]" fill="none" stroke="currentColor" strokeWidth="2.700">
            {a.icon}
          </svg>
          <span className={`mt-[15px] text-[43.500px] leading-[48px] ${a.weight}`}>{a.label}</span>
        </div>
      ))}
    </footer>
  );
}

function NavBar() {
  return (
    <div className="flex h-[126px] items-start pl-[245px] pt-[38px] text-[#888]">
      <svg viewBox="0 0 52 48" className="h-[48px] w-[52px]" stroke="currentColor" strokeWidth="3.600" strokeLinecap="round">
        <path d="M3 8H49M3 25H49M3 42H49" />
      </svg>
      <svg viewBox="0 0 72 48" className="ml-[208px] h-[48px] w-[72px]" fill="none" stroke="currentColor" strokeWidth="3.400" strokeLinecap="round">
        <path d="M3 21L32 4.500Q36 2.500 40 4.500L69 21M15 27V39Q15 44 20 44H53Q58 44 58 39V27" />
      </svg>
      <svg viewBox="0 0 54 48" className="ml-[220px] h-[48px] w-[54px]" fill="none" stroke="currentColor" strokeWidth="3.400" strokeLinecap="round">
        <path d="M8 11H45Q51 11 51 17V36Q51 42 45 42H11" />
        <path d="M3 11.500L13 4V12Z" fill="currentColor" strokeWidth="1.500" />
      </svg>
    </div>
  );
}

export default function App() {
  return (
    <div className={`h-[2340px] w-[1080px] overflow-hidden bg-white ${FONT}`}>
      <StatusBar />
      <Header />
      <Quote />
      <Notice />
      <Tabs />
      <MainBar />
      <div className="flex">
        <div className="relative w-[694px]">
          <PriceChart />
          <PaneBar
            label="成交量"
            labelBox="w-[108px]"
            chip="w-[151px]"
            items={[
              { text: '1177万', box: 'ml-[4px] w-[70px]', dir: 'down', arrow: 'ml-[6px] w-[14px]' },
              { text: 'MA1:1216万', box: 'ml-[10px] w-[127px]', dir: 'down', arrow: 'ml-[7px] w-[14px]' },
              { text: 'MA2:1564万', box: 'ml-[10px] w-[132px]', dir: 'down', arrow: 'ml-[6px] w-[14px]' },
            ]}
          />
          <button className="absolute left-[648px] top-[405px] flex h-[61px] w-[45px] items-center justify-center rounded-l-[12px] bg-[#999]">
            <svg viewBox="0 0 18 30" className="h-[30px] w-[18px]" fill="none" stroke="#fff" strokeWidth="3.600">
              <path d="M2 2L15 15L2 28" />
            </svg>
          </button>
          <VolumeChart />
          <PaneBar
            label="KDJ"
            labelBox="w-[76px]"
            chip="w-[119px]"
            items={[
              { text: 'K:77.43', box: 'ml-[3px] w-[125px]', dir: 'up', arrow: 'ml-[7px] w-[20px]' },
              { text: 'D:68.01', box: 'ml-[14px] w-[123px]', dir: 'up', arrow: 'ml-[8px] w-[20px]' },
              { text: 'J:96.26', box: 'ml-[16px] w-[122px]', dir: 'up', arrow: 'ml-[7px] w-[20px]' },
            ]}
          />
          <KdjChart />
          <PaneBar
            label="BOLL"
            labelBox="w-[101px]"
            chip="w-[144px]"
            items={[
              { text: 'MID:5.90', box: 'ml-[3px] w-[126px]', dir: 'up', arrow: 'ml-[5px] w-[16px]' },
              { text: 'UP:9.33', box: 'ml-[13px] w-[108px]', dir: 'up', arrow: 'ml-[5px] w-[16px]' },
              { text: 'LOW:2.47', box: 'ml-[13px] w-[140px]', dir: 'down', arrow: 'ml-[4px] w-[16px]' },
            ]}
          />
          <BollChart />
          <PaneBar
            label="MACD"
            labelBox="w-[118px]"
            chip="w-[163px]"
            items={[
              { text: 'DIF:0.97', box: 'ml-[3px] w-[117px]', dir: 'up', arrow: 'ml-[5px] w-[16px]' },
              { text: 'DEA:0.62', box: 'ml-[16px] w-[133px]', dir: 'up', arrow: 'ml-[5px] w-[16px]' },
              { text: 'M:0.70', box: 'ml-[15px] w-[98px]', dir: 'up', arrow: 'ml-[4px] w-[16px]' },
            ]}
          />
          <MacdChart />
          <DateAxis />
        </div>
        <ChipPanel />
      </div>
      <BottomBar />
      <NavBar />
    </div>
  );
}
